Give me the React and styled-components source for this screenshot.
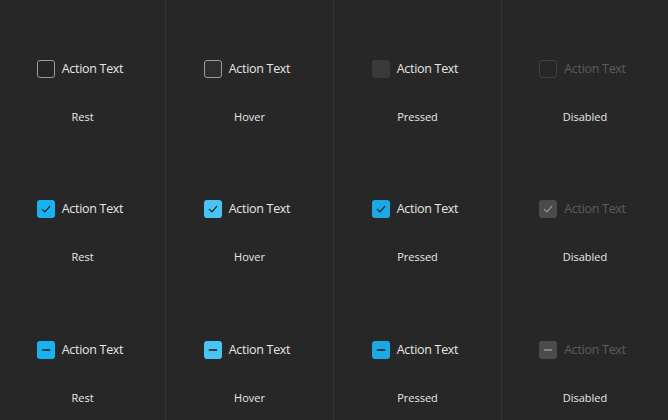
import React from "react";
import styled, { createGlobalStyle, css } from "styled-components";

const GlobalStyle = createGlobalStyle`
  html, body {
    margin: 0;
    padding: 0;
    background: #272727;
  }
  body {
    font-family: "Open Sans", "Noto Sans", sans-serif;
  }
`;

const Grid = styled.div`
  display: grid;
  grid-template-columns: 165px 168px 168px 1fr;
  width: 668px;
  height: 420px;
  overflow: hidden;
`;

const Column = styled.div`
  display: flex;
  flex-direction: column;
  border-left: ${(p) => (p.$first ? "none" : "1px solid #323232")};
`;

const Cell = styled.div`
  height: ${(p) => (p.$last ? "141px" : "140px")};
  display: flex;
  flex-direction: column;
  align-items: center;
  padding-top: ${(p) => (p.$last ? "61px" : "60px")};
  box-sizing: border-box;
`;

const CheckRow = styled.div`
  display: flex;
  align-items: center;
  gap: 7px;
  height: 18px;
  margin-right: 5px;
`;

const boxStyles = {
  rest: css`
    border: 1px solid #9b9b9b;
    background: rgba(0, 0, 0, 0.05);
  `,
  hover: css`
    border: 1px solid #9b9b9b;
    background: #2e2e2e;
  `,
  pressed: css`
    border: 1px solid #3a3a3a;
    background: #3a3a3a;
  `,
  disabled: css`
    border: 1px solid #404040;
    background: transparent;
  `,
};

const fills = {
  rest: "#17b2ef",
  hover: "#48c3f2",
  pressed: "#1ba8e4",
  disabled: "#4b4b4b",
};

const Box = styled.span`
  width: 18px;
  height: 18px;
  box-sizing: border-box;
  border-radius: 3px;
  display: flex;
  align-items: center;
  justify-content: center;
  ${(p) =>
    p.$mark === "none"
      ? boxStyles[p.$state]
      : css`
          border: none;
          background: ${fills[p.$state]};
        `}
`;

const ActionText = styled.span`
  font-size: 12.5px;
  letter-spacing: -0.3px;
  line-height: 18px;
  color: ${(p) => (p.$disabled ? "#5c5c5c" : "#e6e6e6")};
`;

const StateLabel = styled.div`
  margin-top: 31px;
  font-size: 11px;
  line-height: 16px;
  color: #e8e8e8;
`;

const Mark = ({ mark, state }) => {
  const color = state === "disabled" ? "#9a9a9a" : "#1a1a1a";
  if (mark === "check") {
    return (
      <svg width="12" height="12" viewBox="0 0 12 12">
        <path
          d="M2.3 6.4 L4.9 8.9 L9.8 3.4"
          fill="none"
          stroke={color}
          strokeWidth="1.2"
          strokeLinecap="round"
          strokeLinejoin="round"
        />
      </svg>
    );
  }
  if (mark === "mixed") {
    return (
      <svg width="12" height="12" viewBox="0 0 12 12">
        <path d="M2.3 6 H9.7" stroke={color} strokeWidth="1.3" strokeLinecap="round" />
      </svg>
    );
  }
  return null;
};

const states = [
  { key: "rest", label: "Rest" },
  { key: "hover", label: "Hover" },
  { key: "pressed", label: "Pressed" },
  { key: "disabled", label: "Disabled" },
];

const marks = ["none", "check", "mixed"];

export default function App() {
  return (
    <>
      <GlobalStyle />
      <Grid>
        {states.map((s, i) => (
          <Column key={s.key} $first={i === 0}>
            {marks.map((m, j) => (
              <Cell key={m} $last={j === marks.length - 1}>
                <CheckRow>
                  <Box $state={s.key} $mark={m}>
                    <Mark mark={m} state={s.key} />
                  </Box>
                  <ActionText $disabled={s.key === "disabled"}>Action Text</ActionText>
                </CheckRow>
                <StateLabel>{s.label}</StateLabel>
              </Cell>
            ))}
          </Column>
        ))}
      </Grid>
    </>
  );
}
